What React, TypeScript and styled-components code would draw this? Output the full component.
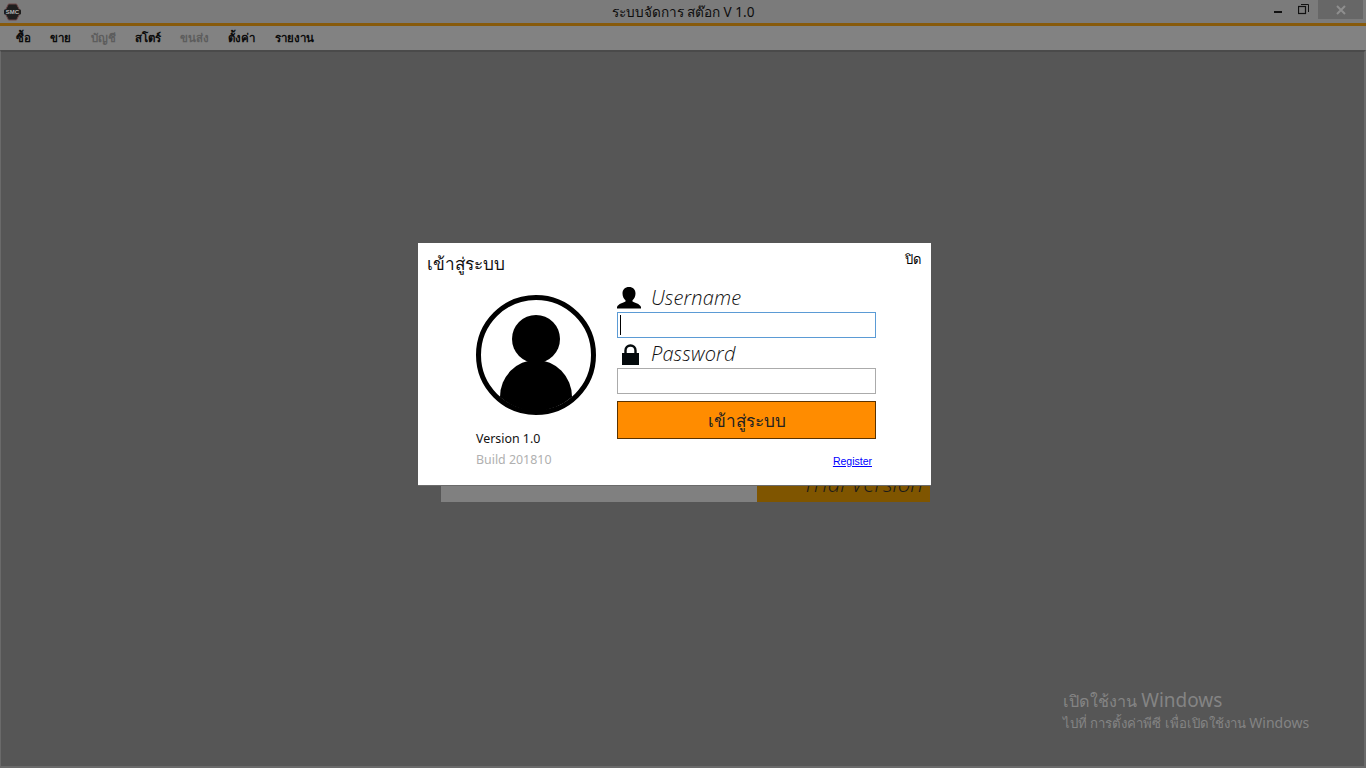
import React from "react";
import styled, { createGlobalStyle } from "styled-components";

const Global = createGlobalStyle`
  html, body { margin: 0; padding: 0; width: 1366px; height: 768px; overflow: hidden; background: #565656; }
  #root { width: 1366px; height: 768px; }
  * { box-sizing: border-box; }
`;

const thai = `"Noto Sans", "Open Sans", "DejaVu Sans", sans-serif`;

const Win = styled.div`
  position: relative;
  width: 1366px;
  height: 768px;
  display: flex;
  flex-direction: column;
  background: #565656;
  font-family: ${thai};
  overflow: hidden;
`;
const TitleBar = styled.div`
  height: 23px;
  background: #7b7b7b;
  display: grid;
  grid-template-columns: 1fr auto 1fr;
  align-items: center;
`;
const TitleText = styled.div`
  font-size: 13.6px;
  color: #0d0d0d;
  line-height: 23px;
`;
const WinButtons = styled.div`
  display: flex;
  justify-content: flex-end;
  align-items: flex-start;
  height: 23px;
  padding-right: 3px;
`;
const WinBtn = styled.div<{ $close?: boolean }>`
  width: ${(p) => (p.$close ? "45px" : "29px")};
  height: 19px;
  display: flex;
  align-items: center;
  justify-content: center;
  background: ${(p) => (p.$close ? "#676767" : "transparent")};
`;
const Accent = styled.div`
  height: 3px;
  background: #875a0b;
`;
const MenuBar = styled.div`
  height: 24px;
  background: #828282;
  display: flex;
  align-items: center;
  padding: 0 0 1px 16px;
  gap: 19.3px;
`;
const MenuItem = styled.span<{ $off?: boolean }>`
  font-size: 11.5px;
  font-weight: 700;
  color: ${(p) => (p.$off ? "#5d5d5d" : "#0b0b0b")};
`;
const Main = styled.div`
  flex: 1;
  background: #565656;
  border-top: 2px solid #4a4a4a;
  border-left: 1px solid #6a6a6a;
  border-right: 2px solid #6a6a6a;
  border-bottom: 2px solid #6a6a6a;
`;
const Splash = styled.div`
  position: absolute;
  left: 441px;
  top: 470px;
  width: 489px;
  height: 32px;
  display: flex;
`;
const SplashBar = styled.div`
  width: 316px;
  background: #808080;
`;
const SplashTag = styled.div`
  flex: 1;
  background: #7f5500;
  color: #1a1a1a;
  font-family: "Open Sans", sans-serif;
  font-style: italic;
  font-weight: 300;
  font-size: 22.500px;
  line-height: 28px;
  padding-left: 46px;
  white-space: nowrap;
`;
const Dialog = styled.div`
  position: absolute;
  left: 418px;
  top: 243px;
  width: 513px;
  height: 243px;
  background: #fff;
  border-bottom: 1px solid #6b6b6b;
  padding: 8px 10px 0 9px;
  display: flex;
  flex-direction: column;
`;
const DialogHead = styled.div`
  display: flex;
  justify-content: space-between;
  align-items: flex-start;
  height: 36px;
`;
const DialogTitle = styled.div`
  font-size: 17.2px;
  line-height: 25px;
  color: #111;
`;
const Close = styled.div`
  font-size: 13px;
  line-height: 16px;
  color: #000;
`;
const DialogBody = styled.div`
  display: flex;
  padding-left: 49px;
`;
const Left = styled.div`
  width: 141px;
  padding-top: 8px;
  display: flex;
  flex-direction: column;
`;
const Version = styled.div<{ $muted?: boolean }>`
  font-size: 12.4px;
  line-height: 21px;
  color: ${(p) => (p.$muted ? "#b0b0b0" : "#111")};
`;
const Versions = styled.div`
  margin-top: 13px;
`;
const Right = styled.div`
  width: 259px;
  display: flex;
  flex-direction: column;
  margin-top: -5px;
`;
const LabelRow = styled.div`
  height: 25px;
  display: flex;
  align-items: center;
  gap: 10px;
  margin-top: 5px;
`;
const IconSlot = styled.div`
  width: 24px;
  height: 25px;
  display: flex;
  align-items: flex-start;
`;
const Label = styled.span`
  font-family: "Open Sans", sans-serif;
  font-style: italic;
  font-weight: 300;
  font-size: 20px;
  letter-spacing: 0.15px;
  line-height: 25px;
  padding-bottom: 4px;
  color: #111;
`;
const Input = styled.div<{ $focus?: boolean }>`
  height: 26px;
  background: #fff;
  border: 1px solid ${(p) => (p.$focus ? "#5b9bd5" : "#ababab")};
  padding: 2px 2px;
`;
const Caret = styled.div`
  width: 1px;
  height: 20px;
  background: #000;
`;
const LoginBtn = styled.div`
  height: 38px;
  margin-top: 7px;
  padding-top: 2px;
  background: #ff8c00;
  border: 1px solid #5a3200;
  display: flex;
  align-items: center;
  justify-content: center;
  font-size: 17.2px;
  color: #222;
`;
const Register = styled.a`
  align-self: flex-end;
  margin: 15px 4px 0 0;
  font-family: "Liberation Sans", sans-serif;
  font-size: 10.5px;
  line-height: 14px;
  color: #0000ff;
  text-decoration: underline;
`;
const Watermark = styled.div`
  position: absolute;
  left: 1063px;
  top: 688px;
  color: #848484;
  white-space: nowrap;
`;
const WmTitle = styled.div`
  font-size: 16.2px;
  line-height: 25px;
`;
const WmTitleLatin = styled.span`
  font-size: 19px;
`;
const WmSub = styled.div`
  font-size: 13.2px;
  line-height: 18px;
`;
const WmSubLatin = styled.span`
  font-size: 14px;
`;
const Logo = styled.svg`
  display: block;
  margin-left: 3px;
`;
const LogoText = styled.text`
  font-family: "Liberation Sans", sans-serif;
  font-size: 6px;
  font-weight: 700;
  fill: #b5b5b5;
`;

const Avatar = () => (
  <svg width="120" height="120" viewBox="476 295 120 120">
    <circle cx="536" cy="355" r="57.5" fill="#fff" stroke="#000" strokeWidth="5" />
    <circle cx="536" cy="339" r="24" fill="#000" />
    <path d="M500 397 A36 37 0 0 1 572 397 A57 57 0 0 1 536 411 A57 57 0 0 1 500 397Z" fill="#000" />
  </svg>
);
const UserIcon = () => (
  <svg width="24" height="22" viewBox="0 0 24 22">
    <path d="M12 0c4 0 6.500 2.600 6.500 6.500 0 2.800-1.300 5.300-3 6.800v1.200c2.500 1.500 7 2 8.500 5.500v1.500H0V20c1.500-3.500 6-4 8.500-5.500v-1.200c-1.700-1.500-3-4-3-6.800C5.500 2.600 8 0 12 0Z" fill="#000" />
  </svg>
);
const LockIcon = () => (
  <svg width="24" height="22" viewBox="0 0 24 22">
    <path d="M8.500 11V7.500a5 5 0 0 1 10 0V11" fill="none" stroke="#040a0c" strokeWidth="2.400" />
    <rect x="5" y="10" width="17" height="12" fill="#040a0c" />
  </svg>
);

export default function App() {
  return (
    <Win>
      <Global />
      <TitleBar>
        <Logo width="20" height="18" viewBox="0 0 20 18">
          <path d="M5.500 1h8l4 8-4 8h-8l-4-8Z" fill="#1e1e1e" stroke="#6d4646" />
          <rect x="1" y="6.500" width="17" height="5" rx="1" fill="#1e1e1e" />
          <LogoText x="9.500" y="11.200" textAnchor="middle">SMC</LogoText>
        </Logo>
        <TitleText>ระบบจัดการ สต๊อก V 1.0</TitleText>
        <WinButtons>
          <WinBtn>
            <svg width="16" height="19" viewBox="0 0 16 19"><rect x="7" y="11" width="8" height="2" fill="#111" /></svg>
          </WinBtn>
          <WinBtn>
            <svg width="11" height="11" viewBox="0 0 11 11" fill="none" stroke="#111">
              <rect x="0.500" y="2.500" width="7" height="7" strokeWidth="1.200" />
              <path d="M3 .5h7.500V8" />
            </svg>
          </WinBtn>
          <WinBtn $close>
            <svg width="10" height="10" viewBox="0 0 10 10"><path d="M1 1l8 8M9 1l-8 8" stroke="#8e8e8e" strokeWidth="2" /></svg>
          </WinBtn>
        </WinButtons>
      </TitleBar>
      <Accent />
      <MenuBar>
        <MenuItem>ซื้อ</MenuItem>
        <MenuItem>ขาย</MenuItem>
        <MenuItem $off>บัญชี</MenuItem>
        <MenuItem>สโตร์</MenuItem>
        <MenuItem $off>ขนส่ง</MenuItem>
        <MenuItem>ตั้งค่า</MenuItem>
        <MenuItem>รายงาน</MenuItem>
      </MenuBar>
      <Main />
      <Splash>
        <SplashBar />
        <SplashTag>Trial Version</SplashTag>
      </Splash>
      <Watermark>
        <WmTitle>เปิดใช้งาน <WmTitleLatin>Windows</WmTitleLatin></WmTitle>
        <WmSub>ไปที่ การตั้งค่าพีซี เพื่อเปิดใช้งาน <WmSubLatin>Windows</WmSubLatin></WmSub>
      </Watermark>
      <Dialog>
        <DialogHead>
          <DialogTitle>เข้าสู่ระบบ</DialogTitle>
          <Close>ปิด</Close>
        </DialogHead>
        <DialogBody>
          <Left>
            <Avatar />
            <Versions>
              <Version>Version 1.0</Version>
              <Version $muted>Build 201810</Version>
            </Versions>
          </Left>
          <Right>
            <LabelRow><IconSlot><UserIcon /></IconSlot><Label>Username</Label></LabelRow>
            <Input $focus><Caret /></Input>
            <LabelRow><IconSlot><LockIcon /></IconSlot><Label>Password</Label></LabelRow>
            <Input />
            <LoginBtn>เข้าสู่ระบบ</LoginBtn>
            <Register>Register</Register>
          </Right>
        </DialogBody>
      </Dialog>
    </Win>
  );
}
